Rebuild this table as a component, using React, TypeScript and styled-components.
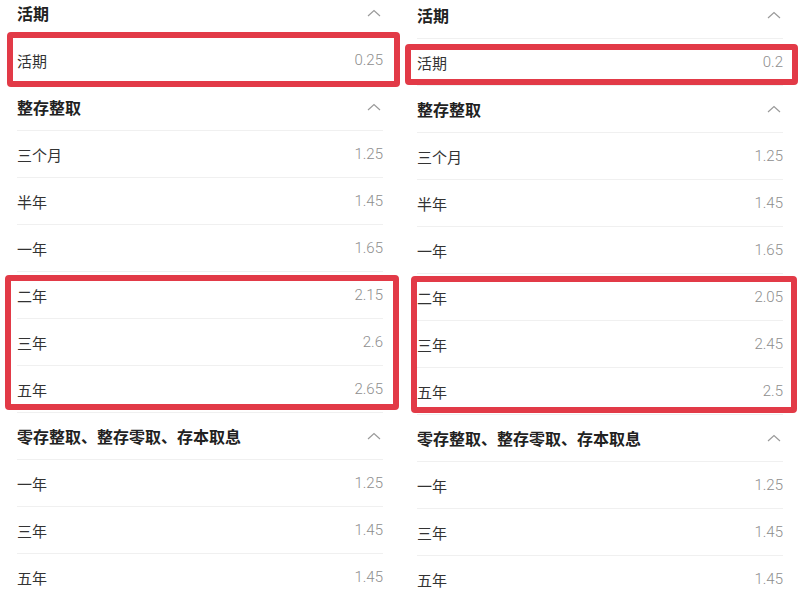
import styled, { createGlobalStyle } from "styled-components";

const GlobalStyle = createGlobalStyle`
  html, body {
    margin: 0;
    padding: 0;
    background: #ffffff;
  }
  body {
    width: 800px;
    height: 600px;
    overflow: hidden;
    font-family: Roboto, "Noto Sans CJK SC", sans-serif;
  }
`;

const Page = styled.div`
  position: relative;
  display: grid;
  grid-template-columns: 400px 400px;
  width: 800px;
  height: 600px;
  overflow: hidden;
`;

const Column = styled.div<{ $offset: number }>`
  display: flex;
  flex-direction: column;
  padding: 0 17px;
  margin-top: ${(p) => p.$offset}px;
`;

const Line = styled.div`
  height: 47px;
  box-sizing: border-box;
  border-bottom: 1px solid #f0f0f0;
  display: flex;
  align-items: center;
  justify-content: space-between;
`;

const SectionTitle = styled.span`
  font-family: "Noto Sans CJK SC", sans-serif;
  font-size: 16px;
  font-weight: 700;
  color: #222222;
`;

const Label = styled.span`
  font-family: "Noto Sans CJK SC", sans-serif;
  font-size: 15px;
  color: #333333;
`;

const Rate = styled.span`
  font-family: Roboto, sans-serif;
  font-size: 15px;
  font-weight: 300;
  color: #8e8e8e;
`;

const Chevron = styled.svg`
  width: 14px;
  height: 8px;
  margin-right: 2px;
`;

const Mark = styled.div<{ $x: number; $y: number; $w: number; $h: number }>`
  position: absolute;
  left: ${(p) => p.$x}px;
  top: ${(p) => p.$y}px;
  width: ${(p) => p.$w}px;
  height: ${(p) => p.$h}px;
  box-sizing: border-box;
  border: 6px solid #e23a47;
  border-radius: 4px;
  pointer-events: none;
`;

type Section = { title: string; rows: [string, string][] };

const left: Section[] = [
  { title: "活期", rows: [["活期", "0.25"]] },
  {
    title: "整存整取",
    rows: [
      ["三个月", "1.25"],
      ["半年", "1.45"],
      ["一年", "1.65"],
      ["二年", "2.15"],
      ["三年", "2.6"],
      ["五年", "2.65"],
    ],
  },
  {
    title: "零存整取、整存零取、存本取息",
    rows: [
      ["一年", "1.25"],
      ["三年", "1.45"],
      ["五年", "1.45"],
    ],
  },
];

const right: Section[] = [
  { title: "活期", rows: [["活期", "0.2"]] },
  {
    title: "整存整取",
    rows: [
      ["三个月", "1.25"],
      ["半年", "1.45"],
      ["一年", "1.65"],
      ["二年", "2.05"],
      ["三年", "2.45"],
      ["五年", "2.5"],
    ],
  },
  {
    title: "零存整取、整存零取、存本取息",
    rows: [
      ["一年", "1.25"],
      ["三年", "1.45"],
      ["五年", "1.45"],
    ],
  },
];

function UpIcon() {
  return (
    <Chevron viewBox="0 0 14 8">
      <polyline
        points="1,7 7,1.5 13,7"
        fill="none"
        stroke="#9a9a9a"
        strokeWidth="1.2"
      />
    </Chevron>
  );
}

function RateList({ sections, offset }: { sections: Section[]; offset: number }) {
  return (
    <Column $offset={offset}>
      {sections.map((s) => (
        <div key={s.title}>
          <Line>
            <SectionTitle>{s.title}</SectionTitle>
            <UpIcon />
          </Line>
          {s.rows.map(([name, rate]) => (
            <Line key={name}>
              <Label>{name}</Label>
              <Rate>{rate}</Rate>
            </Line>
          ))}
        </div>
      ))}
    </Column>
  );
}

export default function App() {
  return (
    <>
      <GlobalStyle />
      <Page>
        <RateList sections={left} offset={-10} />
        <RateList sections={right} offset={-8} />
        <Mark $x={7} $y={32} $w={393} $h={55} />
        <Mark $x={5} $y={275} $w={394} $h={135} />
        <Mark $x={405} $y={44} $w={393} $h={41} />
        <Mark $x={411} $y={276} $w={386} $h={137} />
      </Page>
    </>
  );
}
